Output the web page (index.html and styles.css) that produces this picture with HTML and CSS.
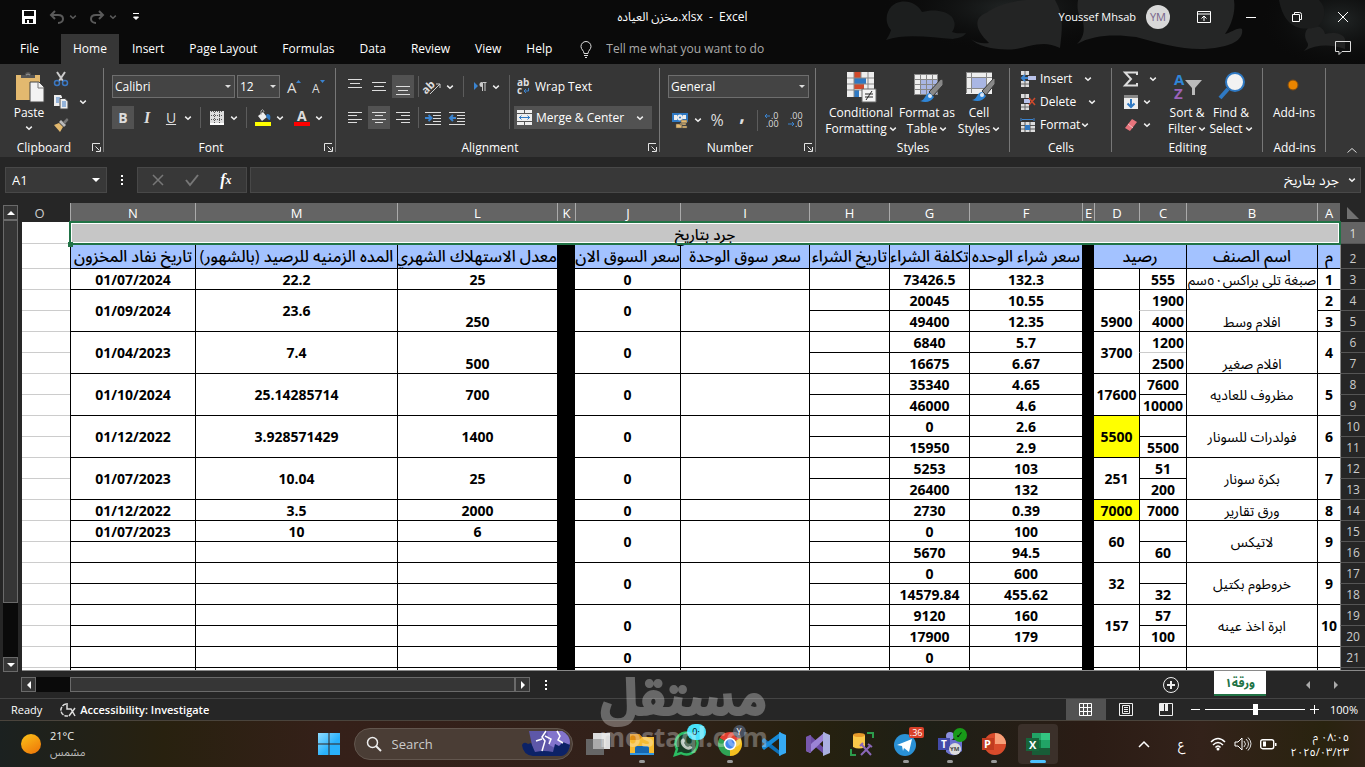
FILE: index.html
```html
<!DOCTYPE html>
<html lang="en">
<head>
<meta charset="utf-8">
<title>مخزن العياده.xlsx - Excel</title>
<link rel="stylesheet" href="styles.css">
</head>
<body>
<svg class="defs" aria-hidden="true">
  <symbol id="chev" viewBox="0 0 8 8"><path d="M1.2 2.6 4 5.2 6.800 2.600" fill="none" stroke="currentColor" stroke-width="1.500"/></symbol>
  <symbol id="launch" viewBox="0 0 9 9"><path d="M.5 8V.5H8M3.500 3.500 7.500 7.500M8.500 4v4.500H4" fill="none" stroke="#e4e4e4"/></symbol>
  <symbol id="dots" viewBox="0 0 4 12"><path d="M1 1h2v2H1zM1 5h2v2H1zM1 9h2v2H1z" fill="#fff"/></symbol>
</svg>
<div class="window">
  <header class="top">
    <svg class="clouds" viewBox="0 0 485 64" aria-hidden="true">
      <defs><radialGradient id="haze"><stop offset="0" stop-color="#222626"/><stop offset="1" stop-color="#0a0a0a" stop-opacity="0"/></radialGradient></defs>
      <ellipse cx="130" cy="8" rx="130" ry="44" fill="url(#haze)"/><ellipse cx="460" cy="20" rx="80" ry="50" fill="url(#haze)"/>
      <path d="M6 40Q10 34 11 30C2 20 8 4 20 2c10-2 18 3 22 10 10-3 24-2 30 5 4 6 3 11 0 15 5 2 10 1 14 1-2 4-8 5-13 6-20-1-46-6-67 1z" fill="#1c1e1e"/>
      <path d="M91 39c5 4 12 5 18 4-16-15-14-26-3-30C118 4 140-2 165 0h10c8 14 8 24 5 48-16-8-28-2-44 1-17 2-38-2-45-10z" fill="#232424"/>
      <path d="M197 44c6-6 8-12 6-22-6-8-6-16-5-22h156c2 12-3 26-9 34 6-1 12-7 17-5 2 9-8 16-22 18-28 6-54-2-84-10-22-3-43-2-59 7z" fill="#252626"/>
      <path d="M424 51c4-4 5-6 3-9-5-10 1-17 9-16 6 1 8 4 9 8 8-2 18-1 20 5v10c-14-5-28-5-41 2z" fill="#222323"/>
      <path d="M399 0h40c8 8 7 20-2 27-22 6-34-5-38-27z" fill="#1b1c1c"/>
    </svg>
    <div class="titlebar">
      <div class="quick">
        <button aria-label="Save"><svg width="16" height="16" viewBox="0 0 16 16"><path d="M1 1h14v14H1z" fill="#fff"/><path d="M3 2h10v5H3zM4 10h8v4H4z" fill="#0a0a0a"/><path d="M6 11h2v4H6z" fill="#fff"/></svg></button>
        <button class="dim" aria-label="Undo"><svg width="16" height="14" viewBox="0 0 16 14"><path d="M6 1 2 5l4 4M2 5h7c4 0 5 2 5 4s-2 4-5 4" fill="none" stroke="currentColor" stroke-width="2"/></svg><svg class="chev"><use href="#chev"/></svg></button>
        <button class="dim" aria-label="Redo"><svg width="16" height="14" viewBox="0 0 16 14"><path d="m10 1 4 4-4 4M14 5H7C3 5 2 7 2 9s2 4 5 4" fill="none" stroke="currentColor" stroke-width="2"/></svg><svg class="chev"><use href="#chev"/></svg></button>
        <button class="custom" aria-label="Customize toolbar"><svg width="8" height="8" viewBox="0 0 8 8"><path d="M1 .5h6M1.500 4h5L4 6.500z" stroke="#fff" fill="#fff"/></svg></button>
      </div>
      <h1 class="title"><bdi>مخزن العياده</bdi>.xlsx &nbsp;-&nbsp; Excel</h1>
      <div class="account">
        <span class="user">Youssef Mhsab</span><span class="avatar">YM</span>
        <button aria-label="Ribbon display"><svg width="14" height="12" viewBox="0 0 14 12"><path d="M.5.5h13v11H.5zM.5 3h13M7 10V5M4.500 7.500 7 5l2.500 2.500" fill="none" stroke="#fff"/></svg></button>
        <button aria-label="Minimize"><svg width="12" height="12"><path d="M1 6.500h10" stroke="#fff"/></svg></button>
        <button aria-label="Restore"><svg width="12" height="12" viewBox="0 0 12 12"><path d="M1.500 3.500h7v7h-7zM3.500 3V1.500h5q2 0 2 2v5H9" fill="none" stroke="#fff"/></svg></button>
        <button aria-label="Close"><svg width="12" height="12"><path d="m1 1 10 10M11 1 1 11" stroke="#fff"/></svg></button>
      </div>
    </div>
    <nav class="tabs">
      <a href="#" class="file">File</a><a href="#" class="on">Home</a><a href="#">Insert</a><a href="#">Page Layout</a><a href="#">Formulas</a><a href="#">Data</a><a href="#">Review</a><a href="#">View</a><a href="#">Help</a>
      <a href="#" class="tell"><svg width="12" height="17" viewBox="0 0 12 17"><path d="M4 12.500c0-3-3-4-3-7a5 5 0 0 1 10 0c0 3-3 4-3 7zM4 14.500h4M5 16.500h2" fill="none" stroke="#ddd"/></svg>Tell me what you want to do</a>
      <button class="comment" aria-label="Comments"><svg width="16" height="15" viewBox="0 0 16 15"><path d="M.5.5h15v10H7l-3 3v-3H.5z" fill="none" stroke="#ddd"/></svg></button>
    </nav>
  </header>

  <section class="ribbon">
    <div class="group clipboard">
      <div class="body">
        <button class="big"><svg width="32" height="32" viewBox="0 0 32 32"><path d="M3 4h24v25H3z" fill="#e3b96f"/><path d="M8 7V4h4q0-3 3-3t3 3h4v3z" fill="#555"/><path d="M13 4q2-2 4 0" fill="none" stroke="#999"/><path d="M17 11h9l5 5v15H17z" fill="#f2f2f2" stroke="#444"/><path d="M25 11v6h6" fill="none" stroke="#777"/></svg><span>Paste</span><svg class="chev"><use href="#chev"/></svg></button>
        <div class="stack">
          <button aria-label="Cut"><svg width="16" height="16" viewBox="0 0 16 16"><path d="m4 1 6 9M12 1 6 10" stroke="#ccc" stroke-width="2"/><circle cx="4" cy="12" r="2.500" fill="none" stroke="#3b78c4" stroke-width="1.500"/><circle cx="12" cy="12" r="2.500" fill="none" stroke="#3b78c4" stroke-width="1.500"/></svg></button>
          <button class="split" aria-label="Copy"><svg width="16" height="16" viewBox="0 0 16 16"><path d="M1 1h7l1 2v9H1z" fill="#eee"/><path d="M3 4h4M3 6h3M3 8h3" stroke="#3b78c4"/><path d="M7 4.500h5l3 3V15H7z" fill="#eee" stroke="#444"/><path d="M9 8h4M9 10h4M9 12h4" stroke="#3b78c4"/></svg><svg class="chev"><use href="#chev"/></svg></button>
          <button aria-label="Format painter"><svg width="16" height="16" viewBox="0 0 16 16"><path d="m1 8 5-2 4 4-3 5z" fill="#e3b96f"/><path d="m6 5 5 5 2-2-5-5z" fill="#bbb"/><path d="m10 5 4-4 1.500 2L12 7z" fill="#777"/></svg></button>
        </div>
      </div>
      <footer>Clipboard<button aria-label="Clipboard settings"><svg><use href="#launch"/></svg></button></footer>
    </div>

    <div class="group font">
      <div class="body rows">
        <div class="row selects"><span class="select"><select aria-label="Font"><option>Calibri</option></select></span><span class="select"><select aria-label="Font size"><option>12</option></select></span>
          <button aria-label="Grow font"><svg width="18" height="16" viewBox="0 0 18 16"><text x="3" y="14" class="ic" font-size="15">A</text><path d="m12 4 2.500-3L17 4z" fill="#3b84d0"/></svg></button><button aria-label="Shrink font"><svg width="18" height="16" viewBox="0 0 18 16"><text x="4" y="14" class="ic" font-size="12">A</text><path d="m12 1 2.500 3L17 1z" fill="#3b84d0"/></svg></button></div>
        <div class="row f2">
          <button class="sq on" aria-label="Bold"><b>B</b></button><button class="sq" aria-label="Italic"><i>I</i></button><button class="sq" aria-label="Underline"><u>U</u></button><svg class="chev"><use href="#chev"/></svg><span class="sep"></span>
          <button class="sq" aria-label="Borders"><svg width="14" height="14" viewBox="0 0 14 14"><path d="M0 0h14v12H0z" fill="#ddd"/><path d="M0 13h14" stroke="#fff" stroke-width="2"/><path d="M1 .5h12M1 4.500h12M1 8.500h12M4.500 1v11M9.500 1v11" stroke="#555" stroke-dasharray="1 1"/></svg></button><svg class="chev"><use href="#chev"/></svg><span class="sep"></span>
          <button class="sq" aria-label="Fill color"><svg width="16" height="17" viewBox="0 0 16 17"><path d="m3 7 5-4 4 5-5 4z" fill="#eee"/><path d="M6 6V2q2-3 3 1" fill="none" stroke="#aaa"/><path d="M12 5c3 0 4 2 3 6-2 0-3-2-4-4z" fill="#2f79c3"/><path d="M0 13h16v4H0z" fill="#ff0"/></svg></button><svg class="chev"><use href="#chev"/></svg>
          <button class="sq end" aria-label="Font color"><svg width="16" height="17" viewBox="0 0 16 17"><text x="3" y="12" class="ic b" font-size="14">A</text><path d="M0 13h16v4H0z" fill="red"/></svg></button><svg class="chev"><use href="#chev"/></svg>
        </div>
      </div>
      <footer>Font<button aria-label="Font settings"><svg><use href="#launch"/></svg></button></footer>
    </div>

    <div class="group align">
      <div class="body">
        <div class="rows left">
          <div class="row a1"><button class="sq" aria-label="Top align"><svg width="14" height="18"><path d="M0 1.500h14M2 5.500h10M0 9.500h14" stroke="#ddd"/></svg></button><button class="sq" aria-label="Middle align"><svg width="14" height="18"><path d="M0 4.500h14M2 8.500h10M0 12.500h14" stroke="#ddd"/></svg></button><button class="sq on" aria-label="Bottom align"><svg width="14" height="18"><path d="M0 8.500h14M2 12.500h10M0 16.500h14" stroke="#ddd"/></svg></button><span class="sep"></span>
            <button class="sq" aria-label="Orientation"><svg width="16" height="16" viewBox="0 0 16 16"><text x="-3" y="10" class="ic b" font-size="11" transform="rotate(-45 6 8)">ab</text><path d="M5 15 15 5M15 9V5h-4" stroke="#ccc" fill="none"/></svg></button><svg class="chev"><use href="#chev"/></svg><span class="sep"></span>
            <button class="sq" aria-label="Text direction"><svg width="14" height="12" viewBox="0 0 14 12"><path d="m1 1 4 4-4 4z" fill="#3b84d0"/><path d="M9.500 10V1.500h4M12 1v9" stroke="#ccc" fill="none"/><path d="M9 1a2.500 2.500 0 0 0 0 5z" fill="#ccc"/></svg></button><svg class="chev"><use href="#chev"/></svg></div>
          <div class="row a1"><button class="sq" aria-label="Align left"><svg width="14" height="13"><path d="M0 1.500h14M0 4.500h9M0 8.500h14M0 11.500h9" stroke="#ddd"/></svg></button><button class="sq on" aria-label="Center"><svg width="14" height="13"><path d="M0 1.500h14M3 4.500h8M0 8.500h14M3 11.500h8" stroke="#ddd"/></svg></button><button class="sq" aria-label="Align right"><svg width="14" height="13"><path d="M0 1.500h14M5 4.500h9M0 8.500h14M5 11.500h9" stroke="#ddd"/></svg></button><span class="sep"></span>
            <button class="sq" aria-label="Decrease indent"><svg width="16" height="14"><path d="M0 1.500h16M8 4.500h8M8 7.500h8M8 10.500h8M0 13.500h16" stroke="#ddd"/><path d="M0 7h6M3.500 4 6.500 7l-3 3" stroke="#3b84d0" stroke-width="2" fill="none"/></svg></button><button class="sq wide" aria-label="Increase indent"><svg width="16" height="14"><path d="M0 1.500h16M8 4.500h8M8 7.500h8M8 10.500h8M0 13.500h16" stroke="#ddd"/><path d="M7 7H1M4 4 1 7l3 3" stroke="#3b84d0" stroke-width="2" fill="none"/></svg></button></div>
        </div>
        <div class="rows wrapcol">
          <button class="row"><svg width="14" height="16" viewBox="0 0 14 16"><text x="0" y="7" class="ic b" font-size="10">ab</text><text x="0" y="15" class="ic b" font-size="10">c</text><path d="M11.500 9v3H7m2-2-2 2 2 2" stroke="#3b84d0" fill="none"/></svg>Wrap Text</button>
          <button class="row on"><svg width="15" height="15" viewBox="0 0 15 15"><path d="M0 0h15v15H0z" fill="#eee"/><path d="M0 3.500h15M0 11.500h15M7.500 0v3M7.500 12v3" stroke="#555"/><path d="M2 7.500h11M4.500 5.500l-2 2 2 2M10.500 5.500l2 2-2 2" stroke="#2f79c3" fill="none"/></svg>Merge &amp; Center<svg class="chev"><use href="#chev"/></svg></button>
        </div>
      </div>
      <footer>Alignment<button aria-label="Alignment settings"><svg><use href="#launch"/></svg></button></footer>
    </div>

    <div class="group number">
      <div class="body rows">
        <div class="row"><span class="select grow"><select aria-label="Number format"><option>General</option></select></span></div>
        <div class="row n2"><button class="sq" aria-label="Accounting format"><svg width="16" height="17" viewBox="0 0 16 17"><path d="M0 1h16v9H0z" fill="#2f79c3"/><path d="M2 3h3v5H2zM11 3h3v4h-3z" fill="#eee"/><circle cx="8" cy="5.500" r="3" fill="#eee"/><circle cx="8" cy="5.500" r="1" fill="#2f79c3"/><path d="M9 8h6v3H9zM8 11h6v2H8zM4 12h6v4H4zM10 14h5v2h-5z" fill="#e3b96f" stroke="#555" stroke-width=".5"/></svg></button><svg class="chev"><use href="#chev"/></svg><button class="pct">%</button><button class="comma">,</button><span class="sep"></span>
          <button class="dec" aria-label="Increase decimal"><svg width="16" height="16" viewBox="0 0 16 16"><text x="7" y="7" class="ic" font-size="9">.0</text><text x="2" y="15" class="ic" font-size="9">.00</text><path d="M6 4H1m2-2L1 4l2 2" stroke="#3b84d0" fill="none"/></svg></button><button class="dec" aria-label="Decrease decimal"><svg width="16" height="16" viewBox="0 0 16 16"><text x="2" y="7" class="ic" font-size="9">.00</text><text x="7" y="15" class="ic" font-size="9">.0</text><path d="M0 12h6m-2-2 2 2-2 2" stroke="#3b84d0" fill="none"/></svg></button></div>
      </div>
      <footer>Number<button aria-label="Number settings"><svg><use href="#launch"/></svg></button></footer>
    </div>

    <div class="group styles">
      <div class="body">
        <button class="big"><svg width="32" height="32" viewBox="0 0 32 32"><path d="M2 1h27v25H2z" fill="#eee"/><path d="M9 1h7v6H9zM9 13h10v5H9z" fill="#d04a2c"/><path d="M9 7h12v6H9zM9 19h5v7H9z" fill="#2f79c3"/><path d="M2 7h27M2 13h27M2 19h27M9 1v25M16 1v6M23 1v25" stroke="#888"/><path d="M17 18h14v13H17z" fill="#f4f4f4" stroke="#666"/><path d="M20 23h8M20 26h8M27 20l-6 9" stroke="#222"/></svg><span>Conditional</span><span>Formatting <svg class="chev"><use href="#chev"/></svg></span></button>
        <button class="big"><svg width="32" height="32" viewBox="0 0 32 32"><path d="M3 3h24v21H3z" fill="#eee"/><path d="M9 9h18v15H9z" fill="#a9b6e4"/><path d="M3 3.500h24M3 8.500h24M3 13.500h24M3 18.500h24M3 23.500h24M3.500 3v21M9.500 3v21M15.500 3v21M21.500 3v21M26.500 3v21" stroke="#888"/><path d="m18 21 12-13 2 1v5L22 25z" fill="#888" stroke="#363636"/><path d="M9 30c6-1 4-7 10-8l4 4c-3 5-8 6-14 4z" fill="#2f86d8"/><circle cx="19" cy="25" r="2" fill="#dce8f6"/></svg><span>Format as</span><span>Table <svg class="chev"><use href="#chev"/></svg></span></button>
        <button class="big"><svg width="32" height="32" viewBox="0 0 32 32"><path d="M3 1h26v22H3z" fill="#eee"/><path d="M8 6h15v11H8z" fill="#a9b6e4"/><path d="M3 1.500h26M3 6.500h26M3 17.500h26M3.500 1v21M8.500 1v21M23.500 1v21" stroke="#888"/><path d="m19 20 12-13 1 1v5L23 24z" fill="#888" stroke="#363636"/><path d="M9 29c6-1 4-7 10-8l4 4c-3 5-8 6-14 4z" fill="#2f86d8"/><circle cx="19" cy="24" r="2" fill="#dce8f6"/></svg><span>Cell</span><span>Styles <svg class="chev"><use href="#chev"/></svg></span></button>
      </div>
      <footer>Styles</footer>
    </div>

    <div class="group cells">
      <div class="body list">
        <button><svg width="16" height="16" viewBox="0 0 16 16"><path d="M1 0h8v4H1zM1 10h8v6H1z" fill="#ddd"/><path d="M5 0v4M5 10v6M1 13h8" stroke="#666"/><path d="M8 5h8v4H8z" fill="#b9c2ea"/><path d="M8 7H2m3-3L2 7l3 3" stroke="#3b84d0" stroke-width="2" fill="none"/></svg>Insert<svg class="chev far"><use href="#chev"/></svg></button>
        <button><svg width="16" height="16" viewBox="0 0 16 16"><path d="M1 0h8v4H1zM1 10h8v6H1z" fill="#ddd"/><path d="M5 0v4M5 10v6M1 13h8" stroke="#666"/><path d="M4 5h6v4H4z" fill="#b9c2ea"/><path d="m9 4 6 7M15 4l-6 7" stroke="#d04a2c" stroke-width="1.500"/></svg>Delete<svg class="chev far"><use href="#chev"/></svg></button>
        <button><svg width="16" height="16" viewBox="0 0 16 16"><path d="M1 1v3M14 1v3M2 2.500h11" stroke="#3b84d0"/><path d="M1 5h14v10H1z" fill="#ddd"/><path d="M1 8.500h14M1 12h14M5 5v10M10 5v10" stroke="#555"/><path d="M5 8h5v5H5z" fill="#2f79c3"/></svg>Format<svg class="chev"><use href="#chev"/></svg></button>
      </div>
      <footer>Cells</footer>
    </div>

    <div class="group editing">
      <div class="body">
        <div class="stack">
          <button class="split sum" aria-label="AutoSum"><svg width="16" height="16" viewBox="0 0 16 16"><path d="M14 4V1.500H2L8 8l-6 6.500h12V12" fill="none" stroke="#ddd" stroke-width="2"/></svg><svg class="chev"><use href="#chev"/></svg></button>
          <button class="split" aria-label="Fill"><svg width="16" height="16" viewBox="0 0 16 16"><path d="M1 1h14v14H1z" fill="#eee"/><path d="M1 1h14v3H1z" fill="#888"/><path d="M8 5v8M4.500 9.500 8 13l3.500-3.500" stroke="#2f79c3" stroke-width="2" fill="none"/></svg><svg class="chev"><use href="#chev"/></svg></button>
          <button class="split" aria-label="Clear"><svg width="16" height="16" viewBox="0 0 16 16"><path d="m9 2 5 3-7 9-5-3z" fill="#e8747c"/><path d="m5 7 5 4" stroke="#f3c4c6"/></svg><svg class="chev"><use href="#chev"/></svg></button>
        </div>
        <button class="big"><svg width="32" height="32" viewBox="0 0 32 32"><text x="3" y="14" font-size="15" fill="#2f86d8" class="az">A</text><text x="3" y="28" font-size="15" fill="#9a62b8" class="az">Z</text><path d="M14 9h17l-7 8v7h-3v-7z" fill="#bbb"/></svg><span>Sort &amp;</span><span>Filter <svg class="chev"><use href="#chev"/></svg></span></button>
        <button class="big"><svg width="32" height="32" viewBox="0 0 32 32"><circle cx="20" cy="11" r="9" fill="#f2f2f2" stroke="#2f79c3" stroke-width="2"/><path d="M13 18 5 27" stroke="#2f79c3" stroke-width="4"/></svg><span>Find &amp;</span><span>Select <svg class="chev"><use href="#chev"/></svg></span></button>
      </div>
      <footer>Editing</footer>
    </div>

    <div class="group addins">
      <div class="body"><button class="big"><svg width="32" height="32"><circle cx="15" cy="14" r="5" fill="#ea8500" stroke="#7a4a14"/></svg><span>Add-ins</span></button></div>
      <footer>Add-ins</footer>
    </div>
    <button class="collapse" aria-label="Collapse ribbon"><svg width="10" height="6"><path d="m.5 5.500 4.500-4 4.500 4" fill="none" stroke="#ddd"/></svg></button>
  </section>

  <section class="formula">
    <label class="name"><input value="A1" aria-label="Name box"><i class="tri"></i></label>
    <svg class="dots"><use href="#dots"/></svg>
    <div class="fx">
      <button aria-label="Cancel"><svg width="12" height="12"><path d="m1 1 10 10M11 1 1 11" stroke="#777" stroke-width="1.500"/></svg></button>
      <button aria-label="Enter"><svg width="14" height="12"><path d="m1 6 4 5 8-10" fill="none" stroke="#777" stroke-width="2"/></svg></button>
      <button class="fn" aria-label="Insert function">f<small>x</small></button>
    </div>
    <label class="bar"><input dir="rtl" lang="ar" value="جرد بتاريخ" aria-label="Formula bar"><svg class="chev"><use href="#chev"/></svg></label>
  </section>

  <main class="sheet">
    <div class="vscroll"><button aria-label="Scroll up"><i class="tri up"></i></button><span class="thumb"></span><span class="trough"></span><button aria-label="Scroll down"><i class="tri"></i></button></div>
    <div class="grid">
      <table dir="rtl">
        <colgroup><col class="ch"><col class="ca"><col class="cb"><col class="cc"><col class="cd"><col class="ce"><col class="cf"><col class="cg"><col class="cg"><col class="ci"><col class="cj"><col class="ck"><col class="cl"><col class="cm"><col class="cn"><col></colgroup>
        <thead><tr><th class="corner"><svg width="12" height="12"><path d="M0 0v12h12z" fill="#707070"/></svg></th><th>A</th><th>B</th><th>C</th><th>D</th><th>E</th><th>F</th><th>G</th><th>H</th><th>I</th><th>J</th><th>K</th><th>L</th><th>M</th><th>N</th><th class="off">O</th></tr></thead>
        <tbody>
        <tr class="r1"><th class="sel">1</th><td colspan="14" class="active"><span>جرد بتاريخ</span><i class="handle"></i></td><td class="o"></td></tr>
        <tr class="heads"><th>2</th><td>م</td><td>اسم الصنف</td><td colspan="2" class="nl">رصيد</td><td class="black" rowspan="21"></td><td>سعر شراء الوحده</td><td>تكلفة الشراء</td><td>تاريخ الشراء</td><td>سعر سوق الوحدة</td><td class="nl">سعر السوق الان</td><td class="black" rowspan="21"></td><td>معدل الاستهلاك الشهري</td><td>المده الزمنيه للرصيد (بالشهور)</td><td>تاريخ نفاد المخزون</td><td class="o"></td></tr>
        <tr><th>3</th><td>1</td><td class="item">صبغة تلي براكس٥٠سم</td><td>555</td><td class="nl"></td><td>132.3</td><td>73426.5</td><td></td><td></td><td class="nl">0</td><td>25</td><td>22.2</td><td>01/07/2024</td><td class="o"></td></tr>
        <tr><th>4</th><td>2</td><td rowspan="2" class="item low">افلام وسط</td><td class="start soft">1900</td><td rowspan="2" class="nl low">5900</td><td>10.55</td><td>20045</td><td></td><td rowspan="2"></td><td rowspan="2" class="nl">0</td><td rowspan="2" class="low">250</td><td rowspan="2">23.6</td><td rowspan="2">01/09/2024</td><td class="o"></td></tr>
        <tr><th>5</th><td>3</td><td class="start">4000</td><td>12.35</td><td>49400</td><td></td><td class="o"></td></tr>
        <tr><th>6</th><td rowspan="2">4</td><td rowspan="2" class="item low">افلام صغير</td><td class="start soft">1200</td><td rowspan="2" class="nl">3700</td><td>5.7</td><td>6840</td><td></td><td rowspan="2"></td><td rowspan="2" class="nl">0</td><td rowspan="2" class="low">500</td><td rowspan="2">7.4</td><td rowspan="2">01/04/2023</td><td class="o"></td></tr>
        <tr><th>7</th><td class="start">2500</td><td>6.67</td><td>16675</td><td></td><td class="o"></td></tr>
        <tr><th>8</th><td rowspan="2">5</td><td rowspan="2" class="item">مظروف للعاديه</td><td>7600</td><td rowspan="2" class="nl">17600</td><td>4.65</td><td>35340</td><td></td><td rowspan="2"></td><td rowspan="2" class="nl">0</td><td rowspan="2">700</td><td rowspan="2">25.14285714</td><td rowspan="2">01/10/2024</td><td class="o"></td></tr>
        <tr><th>9</th><td>10000</td><td>4.6</td><td>46000</td><td></td><td class="o"></td></tr>
        <tr><th>10</th><td rowspan="2">6</td><td rowspan="2" class="item">فولدرات للسونار</td><td></td><td rowspan="2" class="nl yellow">5500</td><td>2.6</td><td>0</td><td></td><td rowspan="2"></td><td rowspan="2" class="nl">0</td><td rowspan="2">1400</td><td rowspan="2">3.928571429</td><td rowspan="2">01/12/2022</td><td class="o"></td></tr>
        <tr><th>11</th><td>5500</td><td>2.9</td><td>15950</td><td></td><td class="o"></td></tr>
        <tr><th>12</th><td rowspan="2">7</td><td rowspan="2" class="item">بكرة سونار</td><td>51</td><td rowspan="2" class="nl">251</td><td>103</td><td>5253</td><td></td><td rowspan="2"></td><td rowspan="2" class="nl">0</td><td rowspan="2">25</td><td rowspan="2">10.04</td><td rowspan="2">01/07/2023</td><td class="o"></td></tr>
        <tr><th>13</th><td>200</td><td>132</td><td>26400</td><td></td><td class="o"></td></tr>
        <tr><th>14</th><td>8</td><td class="item">ورق تقارير</td><td>7000</td><td class="nl yellow">7000</td><td>0.39</td><td>2730</td><td></td><td></td><td class="nl">0</td><td>2000</td><td>3.5</td><td>01/12/2022</td><td class="o"></td></tr>
        <tr><th>15</th><td rowspan="2">9</td><td rowspan="2" class="item">لاتيكس</td><td></td><td rowspan="2" class="nl">60</td><td>100</td><td>0</td><td></td><td rowspan="2"></td><td rowspan="2" class="nl">0</td><td>6</td><td>10</td><td>01/07/2023</td><td class="o"></td></tr>
        <tr><th>16</th><td>60</td><td>94.5</td><td>5670</td><td></td><td></td><td></td><td></td><td class="o"></td></tr>
        <tr><th>17</th><td rowspan="2">9</td><td rowspan="2" class="item">خروطوم بكتيل</td><td></td><td rowspan="2" class="nl">32</td><td>600</td><td>0</td><td></td><td rowspan="2"></td><td rowspan="2" class="nl">0</td><td></td><td></td><td></td><td class="o"></td></tr>
        <tr><th>18</th><td>32</td><td>455.62</td><td>14579.84</td><td></td><td></td><td></td><td></td><td class="o"></td></tr>
        <tr><th>19</th><td rowspan="2">10</td><td rowspan="2" class="item">ابرة اخذ عينه</td><td>57</td><td rowspan="2" class="nl">157</td><td>160</td><td>9120</td><td></td><td rowspan="2"></td><td rowspan="2" class="nl">0</td><td></td><td></td><td></td><td class="o"></td></tr>
        <tr><th>20</th><td>100</td><td>179</td><td>17900</td><td></td><td></td><td></td><td></td><td class="o"></td></tr>
        <tr><th>21</th><td></td><td></td><td></td><td class="nl"></td><td></td><td>0</td><td></td><td></td><td class="nl">0</td><td></td><td></td><td></td><td class="o"></td></tr>
        <tr><th></th><td></td><td></td><td></td><td class="nl"></td><td></td><td></td><td></td><td></td><td class="nl"></td><td></td><td></td><td></td><td class="o"></td></tr>
        </tbody>
      </table>
    </div>
  </main>

  <div class="sheetbar">
    <div class="hscroll"><button aria-label="Scroll left"><i class="tri lt"></i></button><span class="trough"></span><span class="thumb"></span><button aria-label="Scroll right"><i class="tri rt"></i></button></div>
    <svg class="dots"><use href="#dots"/></svg>
    <div class="sheettabs">
      <button aria-label="New sheet"><svg width="18" height="18"><circle cx="9" cy="9" r="7.500" fill="none" stroke="#eee"/><path d="M9 5v8M5 9h8" stroke="#eee" stroke-width="2"/></svg></button>
      <a href="#" class="sheettab" lang="ar" dir="rtl">ورقة١</a>
      <span class="nav"><i class="tri lt gray"></i><i class="tri rt gray"></i></span>
    </div>
  </div>

  <div class="status">
    <span>Ready</span>
    <a href="#" class="access"><svg width="17" height="16" viewBox="0 0 17 16"><path d="M6 2a6 6 0 0 0 2 12" fill="none" stroke="#ddd" stroke-width="1.500" stroke-dasharray="4 1"/><path d="M7 1v6h4l4 7M15 6l-6 8" fill="none" stroke="#ddd" stroke-width="1.500"/></svg>Accessibility: Investigate</a>
    <div class="views">
      <button class="on" aria-label="Normal"><svg width="14" height="13"><path d="M.5.5h12v12H.5zM.5 4.500h12M.5 8.500h12M4.500.5v12M8.500.5v12" fill="none" stroke="#fff"/></svg></button>
      <button aria-label="Page layout"><svg width="14" height="13"><path d="M.5.5h13v12H.5zM3.500 2.500h7v8h-7zM5 4.500h4M5 6.500h4M5 8.500h4" fill="none" stroke="#eee"/></svg></button>
      <button aria-label="Page break"><svg width="14" height="13"><path d="M.5.5h13v12H.5z" fill="none" stroke="#eee"/><path d="M1 1h4v7H1zM6 1h3v7H6z" fill="#eee"/></svg></button>
      <button class="zoom" aria-label="Zoom out"><svg width="9" height="9"><path d="M0 4.500h9" stroke="#fff"/></svg></button>
      <input type="range" min="0" max="100" value="50" aria-label="Zoom">
      <button class="zoom" aria-label="Zoom in"><svg width="9" height="9"><path d="M0 4.500h9M4.500 0v9" stroke="#fff"/></svg></button>
      <span class="pc">100%</span>
    </div>
  </div>

  <footer class="taskbar">
    <div class="weather"><svg width="22" height="22"><defs><linearGradient id="sun" x2=".6" y2="1"><stop stop-color="#fcc419"/><stop offset="1" stop-color="#ef7d0a"/></linearGradient></defs><circle cx="11" cy="11" r="10" fill="url(#sun)"/></svg><p><span>21°C</span><span lang="ar">مشمس</span></p></div>
    <div class="apps">
      <button aria-label="Start"><svg width="24" height="24" viewBox="0 0 24 24"><defs><linearGradient id="win" x2="1" y2="1"><stop stop-color="#8fdcff"/><stop offset=".6" stop-color="#29b1fb"/></linearGradient></defs><path d="M1 1h10.500v10.500H1zM12.500 1H23v10.500H12.500zM1 12.500h10.500V23H1zM12.500 12.500H23V23H12.500z" fill="url(#win)"/></svg></button>
      <label class="search"><svg width="16" height="16"><circle cx="6.500" cy="6.500" r="5" fill="none" stroke="#eee" stroke-width="1.500"/><path d="m10 10 5 5" stroke="#eee" stroke-width="2"/></svg><input placeholder="Search" aria-label="Search">
        <svg width="50" height="28" viewBox="0 0 50 28"><path d="M8 1h33q8 4 8 12T42 25H13z" fill="#5d57a8"/><path d="M26 1h15q8 4 8 12l-9 8-12-6z" fill="#8274cc"/><path d="M1 15q2-4 6-1l3-1 4 9q9-2 18 0l2-8 4 2 4-4 7 3c-1 7-5 11-9 11H12Q2 25 1 15z" fill="#0c2266"/><path d="m25 1-4 6 3 4-3 10M24 6l6 3-2 5M21 9l-6 2M36 1l3 5-2 4 5 3" fill="none" stroke="#fff" stroke-width="1.500"/></svg></label>
      <button aria-label="Task view"><svg width="26" height="26" viewBox="0 0 26 26"><path d="M1 8h18v16H1z" fill="#666"/><path d="M8 2h17v16H8z" fill="#ddd"/><path d="M8 8h11v10H8z" fill="#aaa"/></svg></button>
      <button class="run" aria-label="File Explorer"><svg width="26" height="26" viewBox="0 0 26 26"><path d="M1 3h9l3 3h12v18H1z" fill="#f7bc32"/><path d="M1 3h9l3 3-3 3H1z" fill="#dd8b12"/><path d="M6 17q0-2 2-2h10q2 0 2 2v7H6z" fill="#1767b0"/><path d="M1 22h24v2H1z" fill="#2f93df"/></svg></button>
      <button aria-label="WhatsApp"><svg width="26" height="26" viewBox="0 0 26 26"><path d="M2 24 4 18a11 11 0 1 1 4 4z" fill="#173d25" stroke="#2bbc62" stroke-width="2.500"/><path d="M8 9q3-4 4 1l-1 2q1 3 4 4l2-1q4 1 1 3c-4 3-12-4-10-9z" fill="#b9c5bb"/></svg><span class="badge cyan">0·</span></button>
      <button class="run" aria-label="Chrome"><svg width="26" height="26" viewBox="0 0 26 26"><path d="M13 13 2.600 7A12 12 0 0 1 23.400 7z" fill="#e24232"/><path d="M13 13 23.400 7A12 12 0 0 1 13 25z" fill="#f4c020"/><path d="M13 13v12A12 12 0 0 1 2.600 7z" fill="#2fa455"/><circle cx="13" cy="13" r="5.500" fill="#4286ee" stroke="#fff" stroke-width="1.500"/></svg><span class="badge slate">Y</span></button>
      <button aria-label="Visual Studio Code"><svg width="26" height="26" viewBox="0 0 26 26"><path d="m1 9 2-2 17 14v4L1 11z" fill="#0d70b8"/><path d="m1 17 2 2L20 6V1L1 15z" fill="#168bd9"/><path d="m18 1 7 3v18l-7 3z" fill="#36aaf4"/></svg></button>
      <button aria-label="Visual Studio"><svg width="26" height="26" viewBox="0 0 26 26"><path d="M1 6 5 4l15 14v6L1 8z" fill="#6b4ba4"/><path d="m1 20 4 2L20 8V1L1 17z" fill="#9b83d5"/><path d="M1 6l5-2v18l-5-2z" fill="#7858ad"/><path d="m18 1 7 3v18l-7 3z" fill="#aab0e1"/></svg></button>
      <button aria-label="Database Studio"><svg width="26" height="26" viewBox="0 0 26 26"><path d="M4 4v12q6 3 12 0V4z" fill="#fac94a"/><ellipse cx="10" cy="4" rx="6" ry="2" fill="#e79a2a"/><path d="M18 2h6v5M2 18v6h5" fill="none" stroke="#2c9c4c" stroke-width="2"/><path d="m13 14 9 10M22 14 12 24M11 15l3-3M19 13l4 3" stroke="#8a67b9" stroke-width="2"/></svg></button>
      <button class="run" aria-label="Telegram"><svg width="26" height="26" viewBox="0 0 26 26"><circle cx="12" cy="14" r="11" fill="#2a91d6"/><path d="m4 14 15-6-3 13-5-4-1 3-1-5z" fill="#fff"/></svg><span class="badge red">.36</span></button>
      <button class="run" aria-label="Teams"><svg width="26" height="26" viewBox="0 0 26 26"><circle cx="13" cy="5" r="4" fill="#8b90df"/><path d="M9 9h16v11q-9 8-16 1z" fill="#6a71cf"/><path d="M1 7h12v12H1z" fill="#434ba9"/><text x="4" y="17" font-size="10" fill="#fff" class="az">T</text><circle cx="18" cy="18" r="6" fill="#ddd"/><text x="13" y="20" font-size="6" fill="#444" class="az">YM</text></svg><span class="badge green">✓</span></button>
      <button class="run" aria-label="PowerPoint"><svg width="26" height="26" viewBox="0 0 26 26"><circle cx="14" cy="13" r="11" fill="#d84b2b"/><path d="M14 2a11 11 0 0 1 11 11H14z" fill="#f7a079"/><path d="M1 7h12v12H1z" fill="#c03c20"/><text x="3" y="17" font-size="11" fill="#fff" class="az">P</text></svg></button>
      <button class="run current" aria-label="Excel"><svg width="26" height="26" viewBox="0 0 26 26"><path d="M7 2h18v22H7z" fill="#21a366"/><path d="M16 2h9v7h-9z" fill="#33c481"/><path d="M7 9h9v8H7z" fill="#107c41"/><path d="M7 17h18v7H7z" fill="#185c37"/><path d="M1 7h13v13H1z" fill="#17653b"/><text x="4" y="18" font-size="11" fill="#fff" class="az">X</text></svg></button>
    </div>
    <div class="tray">
      <button aria-label="Hidden icons"><svg width="12" height="8"><path d="m1 7 5-5 5 5" fill="none" stroke="#fff" stroke-width="1.500"/></svg></button>
      <span lang="ar" class="lang">ع</span>
      <span class="net"><svg width="16" height="14" viewBox="0 0 16 14"><path d="M1 5q7-7 14 0M3 8q5-5 10 0M5.500 10.500q2.500-3 5 0" fill="none" stroke="#fff" stroke-width="1.500"/><circle cx="8" cy="12" r="1.500" fill="#fff"/></svg>
      <svg width="18" height="14" viewBox="0 0 18 14"><path d="M1 5h3l4-4v12L4 9H1z" fill="none" stroke="#fff"/><path d="M10 4q3 3 0 6M12 2q5 5 0 10M14 0.500q6 6 0 13" fill="none" stroke="#ddd"/></svg>
      <svg width="17" height="12" viewBox="0 0 17 12"><rect x=".7" y="1.700" width="13" height="9" rx="2" fill="none" stroke="#fff" stroke-width="1.400"/><path d="M3 3.500h3v5H3zM15 5h1.500v3H15z" fill="#fff"/></svg></span>
      <time lang="ar"><span dir="rtl">٠٨:٠٥ م</span><span dir="ltr">٢٠٢٥/٠٣/٢٣</span></time>
    </div>
  </footer>
  <div class="mark"><span lang="ar">مستقل</span><span>mostaql.com</span></div>
</div>
</body>
</html>
```

FILE: styles.css
```css
* { box-sizing: border-box; }
body { margin: 0; background: #262626; color: #fff; font: 12px/16px "Open Sans", "Noto Sans", "Noto Sans Arabic", "DejaVu Sans", sans-serif; }
button, input, select { font: inherit; color: inherit; background: none; border: 0; padding: 0; margin: 0; }
button { display: flex; align-items: center; justify-content: center; }
a { color: inherit; text-decoration: none; }
svg { display: block; flex: none; overflow: visible; }
.defs { position: absolute; width: 0; height: 0; overflow: hidden; }
.window { position: relative; height: 100vh; display: flex; flex-direction: column; overflow: hidden; }
.chev { width: 8px; height: 8px; color: #eee; }
.ic { fill: #ddd; font-family: "Open Sans", sans-serif; }
.ic.b, .az { font-weight: 700; font-family: "Open Sans", sans-serif; }
.tri { border: 4px solid transparent; border-top: 4px solid #fff; border-bottom: 0; }
.tri.up { border-top: 0; border-bottom: 4px solid #fff; }
.tri.lt { border: 4px solid transparent; border-right-color: #fff; border-left: 0; }
.tri.rt { border: 4px solid transparent; border-left-color: #fff; border-right: 0; }
.tri.lt.gray { border-right-color: #aaa; }
.tri.rt.gray { border-left-color: #aaa; }

/* title and tabs */
.top { position: relative; background: #0a0a0a; }
.clouds { position: absolute; right: 0; top: 0; width: 485px; height: 64px; overflow: hidden; }
.titlebar { position: relative; display: grid; grid-template-columns: 1fr auto 1fr; height: 34px; align-items: center; }
.quick { display: flex; align-items: center; padding-left: 21px; gap: 12px; }
.quick button { gap: 4px; }
.quick .dim, .quick .dim .chev { color: #5a5a5a; }
.quick .custom { margin-left: 3px; }
.title { margin: 0; font-size: 12px; font-weight: 400; }
.account { display: flex; align-items: center; justify-content: flex-end; padding-right: 16px; }
.user { font-size: 11px; }
.avatar { width: 24px; height: 24px; border-radius: 50%; background: #d8d8d8; color: #77638a; line-height: 24px; text-align: center; font-size: 11px; margin: 0 27px 0 10px; }
.account button { width: 12px; margin-left: 34px; }
.account button:nth-of-type(1) { width: 14px; margin-left: 0; }
.tabs { position: relative; display: flex; height: 30px; }
.tabs a { display: flex; align-items: center; padding: 0 12px 0 13px; }
.tabs .file { padding: 0 22px 0 20px; }
.tabs .on { background: #363636; padding: 0 12px; }
.tabs .tell { color: #aaa; gap: 14px; padding-left: 16px; }
.comment { margin-left: auto; padding: 0 14px 2px 0; }

/* ribbon */
.ribbon { display: flex; height: 93px; background: #363636; }
.group { position: relative; display: flex; flex-direction: column; }
.group::after { content: ""; position: absolute; right: 0; top: 4px; height: 84px; width: 1px; background: #777; }
.group footer { position: relative; text-align: center; height: 18px; line-height: 18px; }
.group footer button { position: absolute; right: 3px; top: 4px; }
.group footer svg { width: 9px; height: 9px; }
.body { flex: 1; min-height: 0; display: flex; padding-top: 7px; }
.clipboard { width: 104px; } .clipboard footer { padding-right: 16px; }
.font { width: 232px; } .font footer { padding-right: 18px; }
.align { width: 324px; } .align footer { padding-right: 16px; }
.number { width: 156px; } .number footer { padding-right: 16px; }
.styles { width: 194px; }
.cells { width: 102px; }
.editing { width: 151px; }
.addins { width: 63px; }
.big { flex-direction: column; justify-content: flex-start; height: 68px; }
.big > span { display: flex; align-items: center; gap: 2px; white-space: nowrap; }
.big > svg:first-child { margin-bottom: 2px; }
.clipboard .big { width: 38px; margin-left: 10px; }
.clipboard .big .chev { margin-top: 3px; }
.stack { display: flex; flex-direction: column; gap: 7px; align-items: flex-start; }
.clipboard .stack { margin-left: 5px; }
.split { gap: 4px; }
.clipboard .split { gap: 10px; }
.editing .stack { margin-left: 11px; width: 42px; }
.split.sum { gap: 10px; }
.editing .big { width: 44px; }
.styles .body { padding-left: 9px; gap: 1px; }
.styles .big { width: 72px; }
.styles .big + .big { width: 58px; }
.styles .big + .big + .big { width: 44px; }
.addins .big { width: 62px; }
.list { flex-direction: column; gap: 7px; padding-left: 10px; align-items: flex-start; }
.list button { gap: 4px; }
.list .far { margin-left: 8px; }
.list button > .chev:last-child:not(.far) { margin-left: -3px; }
.rows, .body.rows { display: flex; flex-direction: column; gap: 8px; padding-top: 4px; }
.body.rows { padding: 11px 7px 0 8px; }
.row { display: flex; align-items: center; height: 23px; flex: none; }
.sq { width: 22px; height: 23px; color: #ddd; font-size: 14px; }
.sq i { font-family: "Liberation Serif", serif; font-weight: 700; font-size: 16px; }
.on { background: #525252; }
.sep { width: 1px; height: 21px; background: #5c5c5c; justify-self: center; }
.select { position: relative; display: flex; height: 23px; }
.select select { appearance: none; width: 100%; border: 1px solid #6e6e6e; background: #444; padding: 0 2px; border-radius: 0; }
.select::after { content: ""; position: absolute; right: 4px; top: 10px; border: 3px solid transparent; border-top-color: #ddd; border-bottom: 0; }
.grow { flex: 1; }
.selects { display: grid; grid-template-columns: 123px 43px 22px 22px; column-gap: 2px; }
.f2 { display: grid; grid-template-columns: 24px 24px 22px 12px 12px 22px 12px 12px 22px 12px 27px 12px; }
.f2 .end { justify-self: end; }
.f2 .chev, .a1 .chev, .n2 .chev { justify-self: center; }
.align .left { padding-left: 8px; }
.a1 { display: grid; grid-template-columns: 24px 24px 22px 8px 22px 12px 14px 20px 12px; justify-items: center; }
.a1 .sq:nth-child(-n+3) { justify-self: start; }
.a1 .wide { grid-column: span 2; }
.wrapcol { border-left: 1px solid #5c5c5c; margin: 4px 0 0 7px; padding: 0 0 0 4px; align-self: flex-start; }
.wrapcol .row { width: 138px; gap: 4px; padding: 0 4px 0 3px; justify-content: flex-start; }
.wrapcol .chev { margin-left: auto; margin-right: 4px; }
.n2 { display: grid; grid-template-columns: 24px 12px 26px 24px 6px 24px 24px; justify-items: center; }
.pct { font-size: 16px; color: #ddd; } .comma { font-size: 20px; font-weight: 700; color: #ddd; padding-bottom: 12px; }
.collapse { margin: auto 8px 4px auto; }

/* formula bar */
.formula { display: flex; height: 46px; padding: 10px 4px 10px 5px; align-items: stretch; }
.name, .bar, .fx { display: flex; align-items: center; background: #383838; border: 1px solid #484848; }
.name { width: 102px; padding: 0 6px; } .name input { width: 100%; min-width: 0; flex: 1; font-size: 13px; }
.dots { width: 4px; height: 12px; }
.formula .dots { margin: 7px 13px; }
.fx { width: 110px; margin-right: 3px; justify-content: space-around; padding: 0 4px; }
.fn { font: italic 700 16px "Liberation Serif", serif; } .fn small { font-size: 12px; }
.bar { flex: 1; padding: 0 4px; gap: 9px; } .bar input { flex: 1; font-size: 14px; }

/* worksheet */
.sheet { flex: 1; min-height: 0; display: flex; padding-left: 3px; gap: 4px; }
.vscroll { width: 15px; display: flex; flex-direction: column; margin: 2px 0 -1px; z-index: 1; }
.vscroll button, .hscroll button { border: 1px solid #6a6a6a; background: #363636; width: 15px; height: 15px; flex: none; }
.thumb { background: #363636; border: 1px solid #6a6a6a; }
.trough { background: #0a0a0a; }
.vscroll .thumb { flex: 7; } .vscroll .trough { flex: 1; }
.grid { flex: 1; min-width: 0; overflow: hidden; border-bottom: 1px solid #8a8a8a; }
table { table-layout: fixed; width: 100%; border-collapse: separate; border-spacing: 0; background: #fff; color: #000; }
.ch { width: 25px; } .ca { width: 23px; } .cb { width: 131px; } .cc { width: 47px; } .cd { width: 45px; } .ce { width: 12px; }
.cf { width: 113px; } .cg { width: 80px; } .ci { width: 129px; } .cj { width: 105px; } .ck { width: 18px; } .cl { width: 160px; } .cm { width: 202px; } .cn { width: 125px; }
th, td { padding: 2px 0 0; overflow: hidden; white-space: nowrap; text-align: center; height: 21px; line-height: 18px; }
td[rowspan] { padding-top: 0; }
th { background: #262626; color: #ccc; font-weight: 400; border-left: 1px solid #8a8a8a; border-bottom: 1px solid #555; }
thead th { height: 19px; line-height: 18px; padding: 0; background: #646464; color: #fff; border-left: 1px solid #aaa; border-bottom: 0; font-size: 13px; }
thead .off, thead .corner { background: #262626; border-left: 0; color: #ccc; }
thead .off { padding-right: 13px; }
thead .corner svg { margin: 0 auto; }
td { border-left: 1px solid #000; border-bottom: 1px solid #000; font-size: 14px; font-weight: 700; }
td.nl { border-left: 0; }
td.o { border-color: #ccc; border-left: 0; }
td.soft { border-bottom-color: #ccc; }
td.start { text-align: right; padding-right: 2px; }
td.low { vertical-align: bottom; }
td.yellow { background: #ff0; }
td.black { background: #000; }
td.item { font-weight: 400; }
.r1 td, .r1 th { height: 22px; }
.r1 .sel { background: #646464; color: #ddd; }
td.active { position: relative; overflow: visible; background: #c6c6c6; border: 0; outline: 2px solid #217346; outline-offset: -1px; box-shadow: inset 0 0 0 2px #fff; font-weight: 500; font-size: 15px; }
.handle { position: absolute; left: -2px; bottom: -3px; width: 5px; height: 5px; background: #217346; }
.heads td { height: 25px; padding: 0; line-height: 24px; background: #a3c2ff; font-size: 16px; font-weight: 500; }
.heads th { height: 25px; vertical-align: bottom; }
.heads td.black { background: #000; }
.heads td.o { background: #fff; }

/* sheet tabs */
.sheetbar { display: flex; height: 28px; padding-left: 21px; align-items: center; border-bottom: 1px solid #444; }
.hscroll { display: flex; width: 509px; height: 15px; }
.hscroll .trough { flex: 1; } .hscroll .thumb { flex: 13; }
.sheetbar > .dots { margin-left: 14px; }
.sheettabs { margin-left: auto; display: flex; align-items: center; height: 28px; }
.sheettab { align-self: flex-start; margin: 0 40px 0 34px; width: 52px; height: 25px; line-height: 23px; background: #fff; color: #217346; border-bottom: 2px solid #217346; text-align: center; font-weight: 700; }
.nav { display: flex; gap: 24px; padding-right: 27px; }

/* status */
.status { display: flex; align-items: center; height: 22px; padding-left: 11px; border-bottom: 1px solid #4a443c; font-size: 11px; }
.access { display: flex; align-items: center; gap: 3px; margin-left: 18px; font-weight: 600; }
.views { margin-left: auto; display: flex; align-items: center; height: 21px; padding-right: 7px; }
.views button { width: 40px; height: 21px; }
.views .zoom { width: 19px; }
.views input { appearance: none; width: 100px; height: 21px; background: linear-gradient(#fff, #fff) center/100% 1px no-repeat; }
.views input::-webkit-slider-thumb { appearance: none; width: 5px; height: 11px; background: #fff; }
.pc { width: 34px; text-align: right; }

/* taskbar */
.taskbar { display: grid; grid-template-columns: 1fr auto 1fr; align-items: center; height: 46px; background: linear-gradient(90deg, #1b2120, #28210f 12%, #352019 24%, #32211a 46%, #26210f 60%, #1e1f16 68%, #2b1c15 80%, #33221a 88%, #29230f 97%, #302317); }
.weather { display: flex; gap: 8px; padding-left: 20px; align-items: center; font-size: 11px; }
.weather p { margin: 0; display: grid; color: #eee; } .weather p span + span { color: #bbb; }
.apps { display: flex; align-items: center; padding-left: 3px; }
.apps button { position: relative; width: 40px; height: 40px; margin: 0 2px; border-radius: 4px; }
.apps button:first-child { margin: 0 5px 0 0; }
.search { display: flex; align-items: center; width: 219px; height: 32px; border-radius: 16px; background: #4a3d35; border: 1px solid #62564e; padding: 0 1px 0 11px; gap: 10px; margin-right: 3px; }
.search input { flex: 1; min-width: 0; font-size: 13px; } .search input::placeholder { color: #ccc; opacity: 1; }
.run::after { content: ""; position: absolute; bottom: 1px; left: 17px; width: 6px; height: 3px; border-radius: 2px; background: #999; }
.apps .current { background: #3b302a; }
.current::after { left: 12px; width: 16px; background: #4cc2ff; }
.badge { position: absolute; right: 2px; top: 3px; font-size: 9px; line-height: 11px; border-radius: 2px; padding: 0 1px; }
.cyan { right: 0; top: 0; width: 19px; height: 16px; border-radius: 8px; background: #48e2fa; color: #000; line-height: 16px; }
.slate { right: 4px; top: 1px; width: 13px; height: 13px; border-radius: 50%; background: #48505e; line-height: 13px; }
.red { background: #d8402a; }
.green { right: 3px; top: 4px; width: 14px; height: 14px; border-radius: 50%; background: #189a18; color: #000; line-height: 14px; }
.tray { display: flex; align-items: center; justify-content: flex-end; padding-right: 16px; }
.lang { margin: 0 25px 0 28px; font-size: 13px; }
.net { display: flex; align-items: center; gap: 8px; margin-right: 14px; }
.tray time { display: grid; text-align: right; font-size: 11px; line-height: 15px; }
.tray time span[dir=rtl] { justify-self: end; }

/* watermark */
.mark { position: absolute; left: 50%; bottom: 16px; width: 164px; margin-left: -83px; display: grid; justify-items: center; color: #fff; opacity: .3; pointer-events: none; font-weight: 700; }
.mark span { font-size: 26px; line-height: 28px; }
.mark span:first-child { font-size: 50px; line-height: 54px; -webkit-text-stroke: 2px #fff; }
```
